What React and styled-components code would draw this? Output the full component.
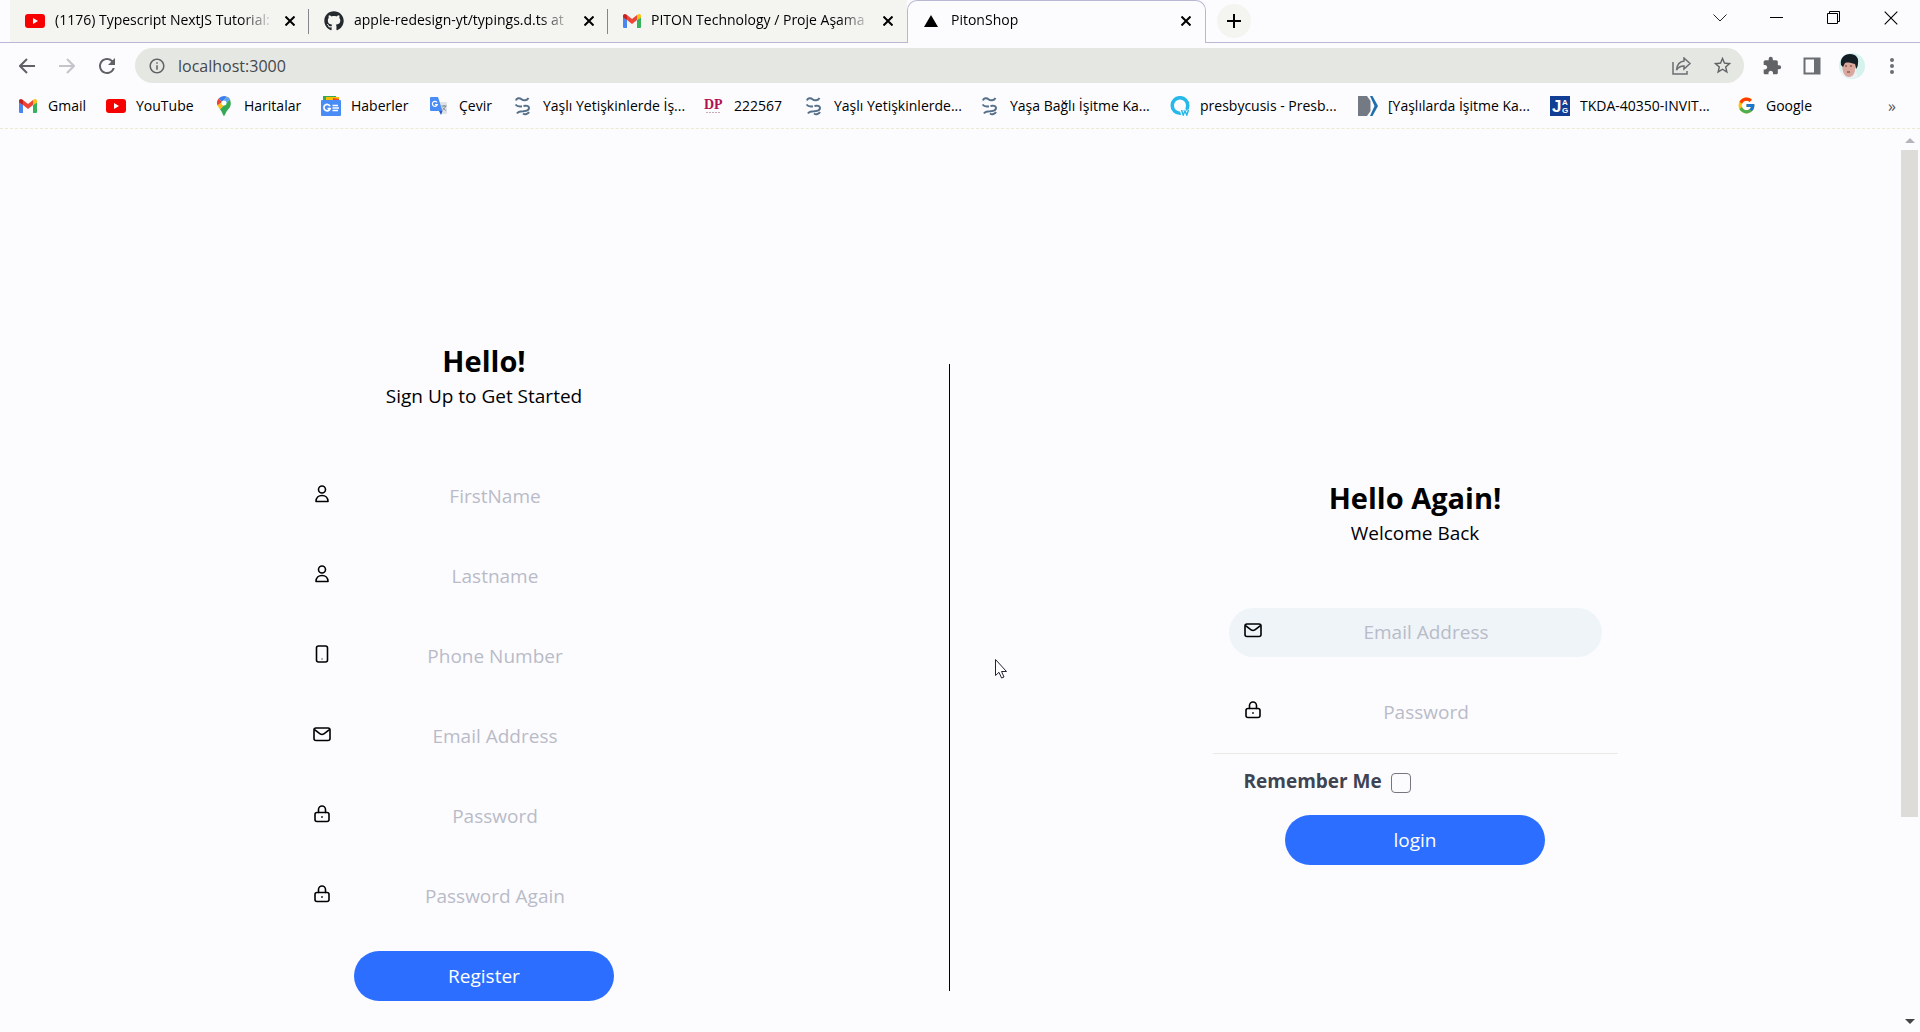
import React from "react";
import styled, { createGlobalStyle, css } from "styled-components";
import { FaGithub } from "react-icons/fa";
import { FcGoogle } from "react-icons/fc";
import { MdExtension, MdRefresh, MdStarBorder, MdInfoOutline } from "react-icons/md";

const GlobalStyle = createGlobalStyle`
  * { box-sizing: border-box; }
  html, body, #root { height: 100%; }
  body {
    margin: 0;
    background: #fcfcff;
    color: #000;
    font-family: "Open Sans", "Noto Sans", sans-serif;
    overflow: hidden;
  }
  button, input { font: inherit; color: inherit; }
  button { border: 0; padding: 0; background: none; }
  a { color: inherit; text-decoration: none; }
  svg { display: block; flex: none; }
`;

/* ---------- icons ---------- */

const YouTubeIcon = () => (
  <svg width="20" height="14" viewBox="0 0 20 14">
    <rect width="20" height="14" rx="3" fill="#f60000" />
    <path d="M8 4l5 3-5 3z" fill="#fff" />
  </svg>
);

const GmailIcon = () => (
  <svg width="18" height="14" viewBox="0 0 18 14">
    <path d="M0 3l4 3v8H1a1 1 0 0 1-1-1z" fill="#4a86f0" />
    <path d="M18 3l-4 3v8h3a1 1 0 0 0 1-1z" fill="#35b25a" />
    <path d="M4 1l5 4 5-4v5l-5 4-5-4z" fill="#ee4438" />
    <path d="M0 2.500a2 2 0 0 1 3.300-1.900L4 1v5L0 3.500z" fill="#c5221f" />
    <path d="M18 2.500a2 2 0 0 0-3.300-1.900L14 1v5l4-2.500z" fill="#fbc116" />
  </svg>
);

const MapsIcon = () => (
  <svg width="14" height="20" viewBox="0 0 14 20">
    <path d="M7 0a7 7 0 0 0-5.400 2.500L5 6l5-5.300A7 7 0 0 0 7 0z" fill="#3c7fee" />
    <path d="M1.600 2.500A7 7 0 0 0 .5 9.500L5 6z" fill="#e94335" />
    <path d="M.5 9.500L3 13.500 10 6l3-3.200A7 7 0 0 0 10 .7L5 6z" fill="#fbc016" />
    <path d="M13 3.200L3 13.500C5.500 16 6 20 7 20s1.500-4 4.500-7S14 6.500 13 3.200z" fill="#34a853" />
    <path d="M10 .7a7 7 0 0 1 3 2.500L9.500 7 6 4.800z" fill="#5aa2f7" />
    <circle cx="7" cy="7" r="2.500" fill="#fff" />
  </svg>
);

const NewsIcon = () => (
  <svg width="20" height="20" viewBox="0 0 20 20">
    <path d="M2 0h13l1 5H2z" fill="#35a853" />
    <path d="M5 1h13v5H5z" fill="#fbbc04" />
    <path d="M12 2l6 1v4h-6z" fill="#ea4335" />
    <rect y="4" width="20" height="16" rx="1" fill="#4a8cf5" />
    <path d="M9 10.200A3.200 3.200 0 1 0 9.200 12.500H6.500" fill="none" stroke="#fff" strokeWidth="1.700" />
    <path d="M11.500 9.500H17M11.500 12H18M11.500 14.500H17" stroke="#fff" strokeWidth="1.500" />
  </svg>
);

const TranslateIcon = () => (
  <svg width="18" height="18" viewBox="0 0 18 18">
    <path d="M7 5h9a1 1 0 0 1 1 1v10a1 1 0 0 1-1 1h-5z" fill="#dfe3e8" />
    <path d="M1 0h7l4.500 14H1a1 1 0 0 1-1-1V1a1 1 0 0 1 1-1z" fill="#4a8cf5" />
    <path d="M9 14h3.500L11 18z" fill="#2a56c6" />
    <path d="M7 5.500A2.500 2.500 0 1 0 7.300 7.500H5" fill="none" stroke="#fff" strokeWidth="1.200" />
    <path d="M11.500 9H16.500M14 8v1M15.500 9c-.5 2-2 3.500-3 4M12.800 10.500c.5 1 2 2.500 3 3" fill="none" stroke="#7a8694" />
  </svg>
);

const DerivativeIcon = () => (
  <svg width="18" height="20" viewBox="0 0 18 20" fill="none" stroke="#56708a" strokeWidth="2">
    <path d="M2 4.500C2.500 2 5.500 1.500 7.500 3.200s5.500 1.500 7-1.200" />
    <path d="M1.500 8.500c2 2.500 5 2 7.500 1.500 3-.6 6-.5 6 2 0 3-3 3-6 3.200-3 .1-5 .3-6 2.300" strokeDasharray="7 1.500 30" />
    <path d="M9 17.500c2 1.500 5 .5 6-1.500" />
  </svg>
);

const DpIcon = () => (
  <svg width="20" height="18" viewBox="0 0 20 18">
    <text x="0" y="12" fontFamily="Liberation Serif, serif" fontWeight="700" fontSize="14" fill="#b3104f">DP</text>
    <path d="M2 15.500h15" stroke="#c9a7b5" strokeDasharray="2 1" />
  </svg>
);

const QIcon = () => (
  <svg width="20" height="20" viewBox="0 0 20 20" fill="none">
    <circle cx="10" cy="9.500" r="7.800" stroke="#27b8ea" strokeWidth="3.500" />
    <path d="M11 14l2 5 2-4 2 4 2-5" stroke="#fcfcff" strokeWidth="3" />
    <path d="M11.500 14l1.700 5 1.800-4 1.800 4 1.700-5" stroke="#27b8ea" strokeWidth="1.500" />
  </svg>
);

const TagIcon = () => (
  <svg width="20" height="20" viewBox="0 0 20 20">
    <path d="M0 0h9l3.500 5v10L9 20H0z" fill="#747a84" />
    <path d="M12 0h2.500L20 10l-5.500 10H12l4.500-10z" fill="#1f6fae" />
  </svg>
);

const JagIcon = () => (
  <svg width="20" height="20" viewBox="0 0 20 20">
    <rect width="20" height="20" fill="#123d94" />
    <text x="2" y="16" fontFamily="Liberation Sans, sans-serif" fontWeight="700" fontSize="17" fill="#fff">J</text>
    <text x="12" y="9" fontFamily="Liberation Sans, sans-serif" fontWeight="700" fontSize="8" fill="#fff">A</text>
    <text x="12" y="17" fontFamily="Liberation Sans, sans-serif" fontWeight="700" fontSize="8" fill="#fff">G</text>
  </svg>
);

const TriangleIcon = () => (
  <svg width="18" height="12" viewBox="0 0 18 12"><path d="M8 0l7 12H1z" /></svg>
);

const CrossIcon = ({ size = 10, weight = 2 }) => (
  <svg width={size} height={size} viewBox="0 0 10 10" stroke="currentColor" strokeWidth={weight}>
    <path d="M.5.500l9 9M9.500.500l-9 9" />
  </svg>
);

const PlusIcon = () => (
  <svg width="16" height="16" viewBox="0 0 16 16" stroke="#000" strokeWidth="2"><path d="M8 1v14M1 8h14" /></svg>
);

const ChevronIcon = () => (
  <svg width="14" height="8" viewBox="0 0 14 8" fill="none" stroke="#222"><path d="M.5.500L7 7 13.500.500" /></svg>
);

const MinimizeIcon = () => (
  <svg width="14" height="2" viewBox="0 0 14 2"><path d="M0 0h13v1H0z" /></svg>
);

const RestoreIcon = () => (
  <svg width="14" height="14" viewBox="0 0 14 14" fill="none" stroke="#000">
    <path d="M.5 2.500h10v10H.5zM2.500 2V.500h10v10H11" />
  </svg>
);

const ArrowIcon = ({ flip }) => (
  <svg width="16" height="16" viewBox="0 0 16 16" fill="none" stroke="currentColor" strokeWidth="2">
    <path d={flip ? "M0 8h15M8 1l7 7-7 7" : "M16 8H1M8 1L1 8l7 7"} />
  </svg>
);

const ShareIcon = () => (
  <svg width="20" height="18" viewBox="0 0 20 18" fill="none" stroke="#6b6e73" strokeWidth="1.500">
    <path d="M1 5v12h14v-3" />
    <path d="M12 1l6 5.500-6 5.500V9C8 9 6 10.500 4.500 13 5 8 8 4.500 12 4z" />
  </svg>
);

const SidePanelIcon = () => (
  <svg width="18" height="18" viewBox="0 0 18 18">
    <path d="M1.500 1.500h15v15h-15z" fill="none" stroke="#6b6e73" strokeWidth="2" />
    <path d="M11 1h6v16h-6z" fill="#6b6e73" />
  </svg>
);

const AvatarIcon = () => (
  <svg width="26" height="26" viewBox="0 0 26 26">
    <circle cx="13" cy="13" r="13" fill="#d5f3ec" />
    <path d="M2 19c1-3 4-5 8-4l6 2 3 6a13 13 0 0 1-12 1C4 23 2 21 2 19z" fill="#eef0f8" />
    <path d="M3 9h13v7c0 4-2 8-6 8s-6-4-6.500-8z" fill="#d9a79b" />
    <path d="M2 12C1 5 5 1 11 1s9 4 8 9c0 3-1 5-2 6l-1-5c-4-1-7-2-10-1l-2 4z" fill="#141c24" />
    <path d="M6 13h2M11 13h2M8 19h3" stroke="#6b3434" />
  </svg>
);

const DotsIcon = () => (
  <svg width="4" height="16" viewBox="0 0 4 16" fill="#6b6e73">
    <circle cx="2" cy="2" r="2" /><circle cx="2" cy="8" r="2" /><circle cx="2" cy="14" r="2" />
  </svg>
);

const FieldSvg = ({ children }) => (
  <svg width="20" height="20" viewBox="0 0 20 20" fill="none" stroke="#000" strokeWidth="1.600" strokeLinejoin="round" strokeLinecap="round">
    {children}
  </svg>
);

const UserIcon = () => (
  <FieldSvg>
    <circle cx="10" cy="5.500" r="3.500" />
    <path d="M4 17.500c0-3.500 2.500-6 6-6s6 2.500 6 6z" />
  </FieldSvg>
);
const PhoneIcon = () => (
  <FieldSvg>
    <rect x="4.500" y="2" width="11" height="16" rx="2" />
    <path d="M9.800 15h.4" strokeWidth="1" />
  </FieldSvg>
);
const MailIcon = () => (
  <FieldSvg>
    <rect x="2" y="4" width="16" height="12.500" rx="2" />
    <path d="M3 6c3 2 5 4.500 7 4.500S14 8 17 6" />
  </FieldSvg>
);
const LockIcon = () => (
  <FieldSvg>
    <rect x="3" y="8.500" width="14" height="9" rx="2" />
    <path d="M6.500 8.500V5.500a3.500 3.500 0 0 1 7 0v3M10 12.700v.6" />
  </FieldSvg>
);

/* ---------- browser chrome ---------- */

const Window = styled.div`
  display: flex;
  flex-direction: column;
  height: 100vh;
`;

const TabStrip = styled.div`
  display: flex;
  height: 43px;
  padding-left: 10px;
  border-bottom: 1px solid #b9b8d4;
`;

const Tab = styled.div`
  position: relative;
  display: flex;
  align-items: center;
  width: 299px;
  height: 42px;
  padding: 0 13px 0 15px;
  gap: 10px;
  font-size: 14px;
  background: #f4f4f1;
  ${(p) =>
    p.$active
      ? css`
          height: 43px;
          padding-bottom: 2px;
          background: #fcfcff;
          border: 1px solid #b9b8d4;
          border-bottom: 0;
          border-radius: 10px 10px 0 0;
        `
      : css`
          &::after {
            content: "";
            position: absolute;
            right: 0;
            top: 9px;
            width: ${p.$last ? 0 : 1}px;
            height: 25px;
            background: #85858c;
          }
        `}
`;

const TabTitle = styled.span`
  flex: 1;
  overflow: hidden;
  line-height: 20px;
  padding-bottom: 2px;
  white-space: nowrap;
  mask-image: linear-gradient(to right, #000 85%, transparent);
`;

const TabClose = styled.button`
  display: grid;
  place-items: center;
  width: 12px;
  height: 20px;
`;

const NewTab = styled.button`
  display: grid;
  place-items: center;
  width: 34px;
  height: 34px;
  margin: 4px 0 0 11px;
  border-radius: 50%;
  background: #f4f4f1;
`;

const WindowControls = styled.div`
  display: flex;
  margin-left: auto;
  height: 36px;
  padding-right: 1px;
`;

const WindowButton = styled.button`
  display: grid;
  place-items: center;
  width: 57px;
`;

const Toolbar = styled.div`
  display: flex;
  align-items: center;
  height: 45px;
  padding-right: 8px;
`;

const ToolButton = styled.button`
  display: grid;
  place-items: center;
  width: 40px;
  height: 36px;
  color: ${(p) => (p.disabled ? "#c4c5ca" : "#606266")};
`;

const NavGroup = styled.div`
  display: flex;
  padding: 0 8px 0 7px;
`;

const AddressBar = styled.label`
  display: flex;
  flex: 1;
  align-items: center;
  height: 35px;
  padding: 0 2px 0 13px;
  gap: 12px;
  border-radius: 18px;
  background: #e5e7e2;
  color: #606266;
`;

const AddressInput = styled.input`
  flex: 1;
  min-width: 0;
  border: 0;
  padding: 0;
  outline: 0;
  background: none;
  font-size: 16px;
  color: #45484c;
`;

const AddressActions = styled.div`
  display: flex;
`;

const ToolGroup = styled.div`
  display: flex;
  padding-left: 8px;
`;

const Bookmarks = styled.nav`
  display: grid;
  grid-template-columns: 88px 108px 107px 108px 84px 191px 100px 176px 190px 188px 192px 186px 1fr auto;
  align-items: center;
  height: 41px;
  padding: 0 24px 5px 18px;
  border-bottom: 1px dashed #ecebcf;
  font-size: 14px;
`;

const Bookmark = styled.a`
  display: flex;
  align-items: center;
  gap: 10px;
  white-space: nowrap;
`;

const BookmarkIcon = styled.span`
  display: grid;
  place-items: center;
  width: 20px;
  height: 20px;
`;

const MoreBookmarks = styled.button`
  font-size: 16px;
  color: #555;
`;

/* ---------- page ---------- */

const Viewport = styled.div`
  display: flex;
  flex: 1;
  min-height: 0;
`;

const Page = styled.main`
  position: relative;
  display: flex;
  flex: 1;
  align-items: center;
  align-self: flex-start;
  padding: 213px 20px 0 19px;
`;

const Column = styled.form`
  display: flex;
  flex: 1;
  flex-direction: column;
  align-items: center;
`;

const Divider = styled.div`
  align-self: stretch;
  width: 1px;
  margin: 22px 0 10px;
  background: #000;
`;

const Title = styled.h1`
  margin: 0;
  font-size: 29px;
  font-weight: 700;
  line-height: 38px;
`;

const Subtitle = styled.p`
  margin: 0 0 59px;
  font-size: 19px;
  line-height: 32px;
`;

const Fields = styled.div`
  display: flex;
  flex-direction: column;
  align-items: center;
  gap: 31px;
  padding-bottom: ${(p) => (p.$ruled ? 16 : 31)}px;
  border-bottom: ${(p) => (p.$ruled ? "1px solid #e9e9e6" : "0")};
  width: 405px;
`;

const Field = styled.label`
  display: flex;
  align-items: center;
  width: 373px;
  height: 49px;
  padding: 0 12px 0 14px;
  border-radius: 25px;
  background: ${(p) => (p.$filled ? "#eef4f8" : "transparent")};
  svg { margin-bottom: 4px; }
`;

const FieldInput = styled.input`
  flex: 1;
  min-width: 0;
  border: 0;
  padding: 0;
  outline: 0;
  background: none;
  font-size: 19px;
  text-align: center;
  &::placeholder { color: #b9bbc8; opacity: 1; }
`;

const Remember = styled.label`
  display: flex;
  align-items: center;
  align-self: stretch;
  gap: 9px;
  width: 373px;
  height: 61px;
  margin: 0 auto;
  padding: 0 15px 7px;
  font-size: 19px;
  font-weight: 700;
  color: #3f4452;
`;

const Checkbox = styled.input`
  appearance: none;
  width: 20px;
  height: 20px;
  margin: 4px 0 0;
  border: 1px solid #767680;
  border-radius: 4px;
`;

const Submit = styled.button`
  width: 260px;
  height: 50px;
  border-radius: 25px;
  background: #2c6eff;
  color: #fff;
  font-size: 19px;
`;

const Scrollbar = styled.div`
  display: flex;
  flex-direction: column;
  align-items: center;
  justify-content: space-between;
  width: 20px;
  padding: 9px 2px 8px 1px;
`;

const Thumb = styled.div`
  flex: 1;
  width: 17px;
  margin: 7px 0 202px;
  background: #dddcd8;
`;

const Pointer = styled.svg`
  position: absolute;
  left: 995px;
  top: 530px;
`;

const tabs = [
  { icon: <YouTubeIcon />, title: "(1176) Typescript NextJS Tutorial:" },
  { icon: <FaGithub size={20} color="#24292e" />, title: "apple-redesign-yt/typings.d.ts at" },
  { icon: <GmailIcon />, title: "PITON Technology / Proje Aşama", last: true },
  { icon: <TriangleIcon />, title: "PitonShop", active: true },
];

const bookmarks = [
  [<GmailIcon />, "Gmail"],
  [<YouTubeIcon />, "YouTube"],
  [<MapsIcon />, "Haritalar"],
  [<NewsIcon />, "Haberler"],
  [<TranslateIcon />, "Çevir"],
  [<DerivativeIcon />, "Yaşlı Yetişkinlerde İş..."],
  [<DpIcon />, "222567"],
  [<DerivativeIcon />, "Yaşlı Yetişkinlerde..."],
  [<DerivativeIcon />, "Yaşa Bağlı İşitme Ka..."],
  [<QIcon />, "presbycusis - Presb..."],
  [<TagIcon />, "[Yaşlılarda İşitme Ka..."],
  [<JagIcon />, "TKDA-40350-INVIT..."],
  [<FcGoogle size={19} />, "Google"],
];

const registerFields = [
  { icon: <UserIcon />, label: "FirstName", type: "text" },
  { icon: <UserIcon />, label: "Lastname", type: "text" },
  { icon: <PhoneIcon />, label: "Phone Number", type: "tel" },
  { icon: <MailIcon />, label: "Email Address", type: "email" },
  { icon: <LockIcon />, label: "Password", type: "password" },
  { icon: <LockIcon />, label: "Password Again", type: "password" },
];

const loginFields = [
  { icon: <MailIcon />, label: "Email Address", type: "email", filled: true },
  { icon: <LockIcon />, label: "Password", type: "password" },
];

const FieldList = ({ fields, ruled }) => (
  <Fields $ruled={ruled}>
    {fields.map((f) => (
      <Field key={f.label} $filled={f.filled}>
        {f.icon}
        <FieldInput type={f.type} placeholder={f.label} aria-label={f.label} />
      </Field>
    ))}
  </Fields>
);

export default function App() {
  const stop = (e) => e.preventDefault();
  return (
    <Window>
      <GlobalStyle />
      <TabStrip>
        {tabs.map((t) => (
          <Tab key={t.title} $active={t.active} $last={t.last}>
            {t.icon}
            <TabTitle>{t.title}</TabTitle>
            <TabClose aria-label="Close tab"><CrossIcon /></TabClose>
          </Tab>
        ))}
        <NewTab aria-label="New tab"><PlusIcon /></NewTab>
        <WindowControls>
          <WindowButton aria-label="Search tabs"><ChevronIcon /></WindowButton>
          <WindowButton aria-label="Minimize"><MinimizeIcon /></WindowButton>
          <WindowButton aria-label="Restore"><RestoreIcon /></WindowButton>
          <WindowButton aria-label="Close"><CrossIcon size={14} weight={0.8} /></WindowButton>
        </WindowControls>
      </TabStrip>
      <Toolbar>
        <NavGroup>
          <ToolButton aria-label="Back"><ArrowIcon /></ToolButton>
          <ToolButton aria-label="Forward" disabled><ArrowIcon flip /></ToolButton>
          <ToolButton aria-label="Reload"><MdRefresh size={24} /></ToolButton>
        </NavGroup>
        <AddressBar>
          <MdInfoOutline size={18} />
          <AddressInput aria-label="Address" defaultValue="localhost:3000" />
          <AddressActions>
            <ToolButton aria-label="Share"><ShareIcon /></ToolButton>
            <ToolButton aria-label="Bookmark"><MdStarBorder size={21} /></ToolButton>
          </AddressActions>
        </AddressBar>
        <ToolGroup>
          <ToolButton aria-label="Extensions"><MdExtension size={20} /></ToolButton>
          <ToolButton aria-label="Side panel"><SidePanelIcon /></ToolButton>
          <ToolButton aria-label="Profile"><AvatarIcon /></ToolButton>
          <ToolButton aria-label="Menu"><DotsIcon /></ToolButton>
        </ToolGroup>
      </Toolbar>
      <Bookmarks>
        {bookmarks.map(([icon, label]) => (
          <Bookmark href="#" key={label}>
            <BookmarkIcon>{icon}</BookmarkIcon>
            {label}
          </Bookmark>
        ))}
        <MoreBookmarks aria-label="More bookmarks">»</MoreBookmarks>
      </Bookmarks>
      <Viewport>
        <Page>
          <Column onSubmit={stop}>
            <Title>Hello!</Title>
            <Subtitle>Sign Up to Get Started</Subtitle>
            <FieldList fields={registerFields} />
            <Submit>Register</Submit>
          </Column>
          <Divider />
          <Column onSubmit={stop}>
            <Title as="h2">Hello Again!</Title>
            <Subtitle>Welcome Back</Subtitle>
            <FieldList fields={loginFields} ruled />
            <Remember>
              Remember Me
              <Checkbox type="checkbox" />
            </Remember>
            <Submit>login</Submit>
          </Column>
          <Pointer width="13" height="20" viewBox="0 0 13 20">
            <path d="M.5.500v16l3.500-3.200 2.600 5.700 2.400-1-2.500-5.500h5z" fill="#fff" stroke="#223" />
          </Pointer>
        </Page>
        <Scrollbar aria-hidden="true">
          <svg width="10" height="5" viewBox="0 0 10 5"><path d="M5 0l5 5H0z" fill="#b4b4bc" /></svg>
          <Thumb />
          <svg width="10" height="5" viewBox="0 0 10 5"><path d="M0 0h10L5 5z" fill="#444" /></svg>
        </Scrollbar>
      </Viewport>
    </Window>
  );
}
